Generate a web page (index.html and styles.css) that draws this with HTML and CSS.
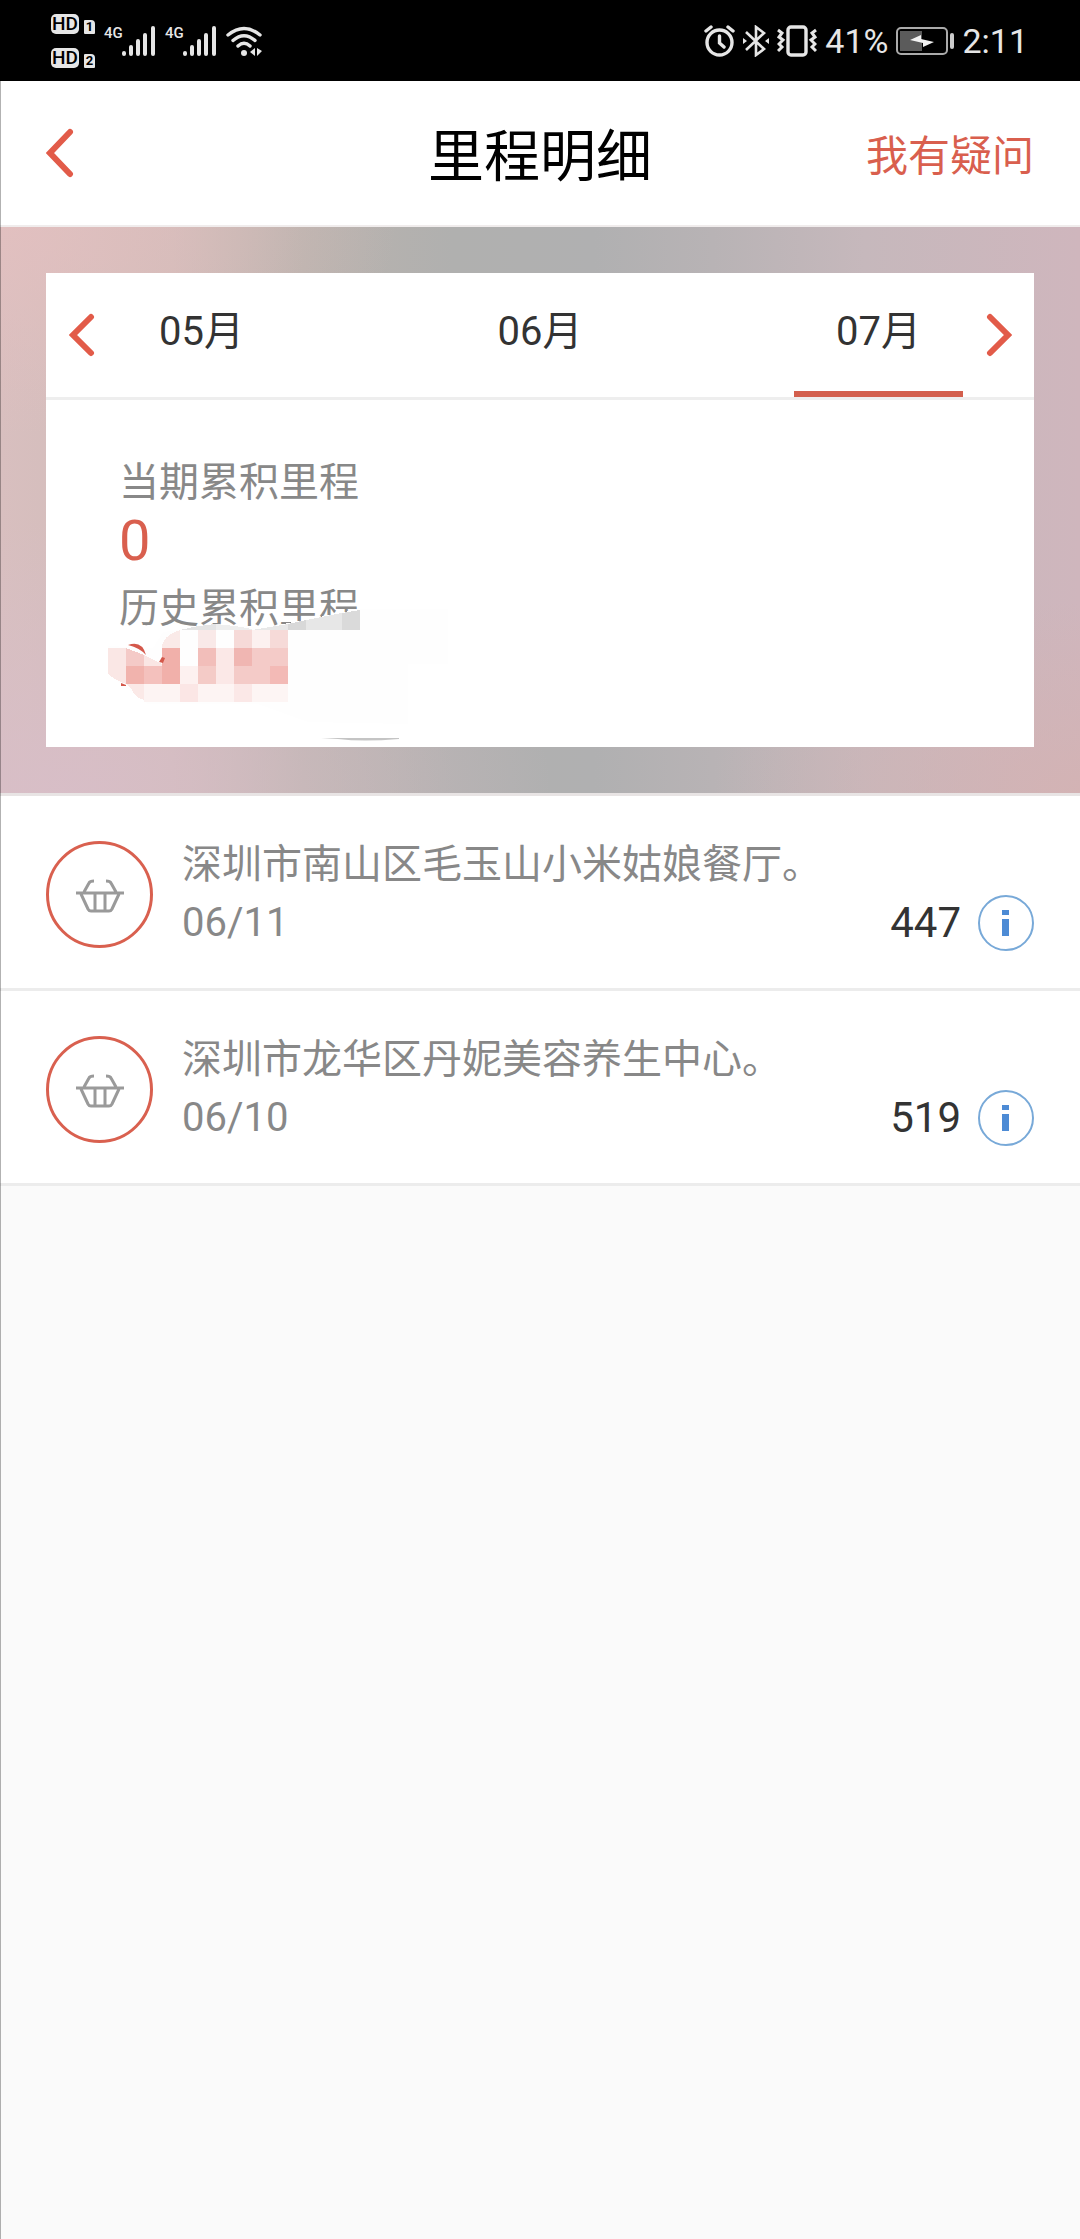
FILE: index.html
```html
<!DOCTYPE html>
<html lang="zh-CN">
<head>
<meta charset="utf-8">
<meta name="viewport" content="width=device-width">
<title>里程明细</title>
<link rel="stylesheet" href="styles.css">
</head>
<body>
<svg class="defs" aria-hidden="true">
  <symbol id="basket" viewBox="0 0 48 34">
    <path d="M0 14H48M8 13L13 4Q14 2 18 2M40 13L35 4Q34 2 30 2M5 15L12 30Q13 32 15 32H33Q35 32 36 30L43 15M19 14V32M29 14V32" fill="none" stroke="#9a9a9a" stroke-width="3"/>
  </symbol>
  <symbol id="bars" viewBox="0 0 34 30">
    <path d="M2 27V28M9 21V28M16 15V28M23 9V28M31 2V28" fill="none" stroke="#e6e6e6" stroke-width="4" stroke-linecap="round"/>
  </symbol>
  <symbol id="info" viewBox="0 0 56 56">
    <circle cx="28" cy="28" r="27" fill="none" stroke="#78a9d8" stroke-width="2"/>
    <path d="M24 15h7v5h-7zM24 24h7v17h-7z" fill="#4d8bd5"/>
  </symbol>
</svg>
<div class="page">
  <div class="status">
    <div class="status-group">
      <div class="sims">
        <div class="sim"><span class="hd">HD</span><span class="slot">1</span></div>
        <div class="sim"><span class="hd">HD</span><span class="slot">2</span></div>
      </div>
      <div class="signal"><span class="net">4G</span><svg class="bars"><use href="#bars"/></svg></div>
      <div class="signal"><span class="net">4G</span><svg class="bars"><use href="#bars"/></svg></div>
      <svg class="wifi" viewBox="0 0 36 30" fill="none" stroke="#e6e6e6" stroke-width="3.4" stroke-linecap="round">
        <path d="M2 9Q18-4 34 9M7 14.500Q18 5 29 14.500M12 20Q18 14.500 24 20"/>
        <circle cx="18" cy="27" r="3" fill="#e6e6e6" stroke="none"/>
        <path d="M24 26L29 22V30zM36 25L31 22V30z" fill="#e6e6e6" stroke="none"/>
      </svg>
    </div>
    <div class="status-group status-right">
      <svg class="alarm" viewBox="0 0 31 32" fill="none" stroke="#e6e6e6" stroke-width="3.400" stroke-linecap="round">
        <circle cx="15.500" cy="17.500" r="12.500"/><path d="M15.500 11V18L20 22M2 6L7 2M29 6L24 2"/>
      </svg>
      <svg class="bluetooth" viewBox="0 0 26 32" fill="none" stroke="#e6e6e6" stroke-width="2.600">
        <path d="M3 7L21 24L13 30V2L21 8L3 25"/><path d="M0 13L4 16L0 19zM26 13L22 16L26 19z" fill="#e6e6e6" stroke="none"/>
      </svg>
      <svg class="vibrate" viewBox="0 0 40 32" fill="none" stroke="#e6e6e6" stroke-width="3">
        <rect x="11" y="2" width="18" height="28" rx="3" stroke-width="3.400"/>
        <path d="M1 5L5 8L2 12L6 15L2 19L5 22L1 26M39 5L35 8L38 12L34 15L38 19L35 22L39 26"/>
      </svg>
      <span>41%</span>
      <svg class="battery" viewBox="0 0 58 28">
        <rect x="1" y="1" width="50" height="26" rx="4" fill="none" stroke="#aaa" stroke-width="2"/>
        <path d="M4 4H26V24H4z" fill="#5b5b5b"/>
        <path d="M14 13L25 8V12L38 15L27 20V16z" fill="#f2f2f2"/>
        <rect x="54" y="6" width="4" height="16" rx="2" fill="#ccc"/>
      </svg>
      <span class="clock">2:11</span>
    </div>
  </div>

  <header class="header">
    <button class="back" aria-label="返回"><svg class="chevron-back" viewBox="0 0 28 50"><path d="M24 4L4 25L24 46"/></svg></button>
    <h1 class="title">里程明细</h1>
    <a class="help" href="#help">我有疑问</a>
  </header>

  <section class="banner">
    <div class="card">
      <div class="months">
        <button class="step" aria-label="上个月"><svg class="chevron" viewBox="0 0 26 44"><path d="M22 4L4 22L22 40"/></svg></button>
        <div class="tabs">
          <button class="tab">05月</button>
          <button class="tab">06月</button>
          <button class="tab tab-active">07月</button>
        </div>
        <button class="step" aria-label="下个月"><svg class="chevron" viewBox="0 0 26 44"><path d="M4 4L22 22L4 40"/></svg></button>
      </div>
      <div class="stats">
        <p class="label">当期累积里程</p>
        <p class="value">0</p>
        <p class="label label-next">历史累积里程</p>
        <div class="value masked">
          <svg class="mosaic" viewBox="0 0 360 130" shape-rendering="crispEdges">
            <path d="M72 16Q110 8 155 14L252 -5H340V50H300V110L200 108L150 90H40L0 60V32L45 34L55 18z" fill="#fefefe"/>
            <path d="M72 16Q92 11 108 10V16z" fill="#e4e4e4"/>
            <path d="M108 10Q130 12 144 15V16H108z" fill="#eee"/>
            <path d="M144 16L180 10V16z" fill="#e8e8e8"/>
            <path d="M180 10L198 6V16H180z" fill="#d8d8d8"/>
            <path d="M198 6L234 -1V16H198z" fill="#e7e7e7"/>
            <path d="M234 -1L252 -4V16H234z" fill="#dadada"/>
            <path d="M54 34Q54 22 72 16V34z" fill="#faeae8"/>
            <path d="M90 16h18v18h-18z" fill="#f9e9e8"/>
            <path d="M126 16h18v18h-18z" fill="#f6dad8"/>
            <path d="M144 16h18v18h-18z" fill="#fcf1f0"/>
            <path d="M162 16h18v18h-18z" fill="#f6dad8"/>
            <path d="M0 34h18v36Q8 67 0 60z" fill="#fae7e5"/>
            <path d="M18 34L36 41V52H18z" fill="#f4cac7"/>
            <path d="M36 41L54 50V52H36z" fill="#fae6e4"/>
            <path d="M54 34h18v36h-18z" fill="#f1b0aa"/>
            <path d="M18 52h18v18h-18z" fill="#f1b3ad"/>
            <path d="M36 52h18v18h-18z" fill="#f4c1bd"/>
            <path d="M72 52h18v18h-18z" fill="#fdf1f0"/>
            <path d="M90 34h18v18h-18z" fill="#f2beba"/>
            <path d="M90 52h18v18h-18z" fill="#f4cbc7"/>
            <path d="M108 34h18v36h-18z" fill="#fbe8e7"/>
            <path d="M126 34h18v18h-18z" fill="#f0b6b2"/>
            <path d="M144 34h36v18h-36z" fill="#f4cbc8"/>
            <path d="M126 52h36v18h-36z" fill="#f4cbc8"/>
            <path d="M162 52h18v18h-18z" fill="#f3bab6"/>
            <path d="M18 70H36V86Q27 84 23 74z" fill="#fbe9e7"/>
            <path d="M36 70h36v18h-36z" fill="#fdf4f3"/>
            <path d="M72 70h18v18h-18z" fill="#fbe6e5"/>
            <path d="M90 70h36v18h-36z" fill="#fdf4f3"/>
            <path d="M126 70h18v18h-18z" fill="#fbe8e7"/>
            <path d="M144 70h36v18h-36z" fill="#fdf5f4"/>
            <g fill="#d4584b" shape-rendering="auto">
              <path d="M20 31Q34 26 38 41Q32 34 20 31z"/>
              <path d="M51 48L54 43L57 44L55 49z"/>
              <path d="M13 69L18 71V72H13z"/>
            </g>
            <path d="M213 124H291V125Q255 128 230 125z" fill="#c4c4c4" shape-rendering="auto"/>
          </svg>
        </div>
      </div>
    </div>
  </section>

  <ul class="list">
    <li class="row">
      <span class="badge"><svg class="basket"><use href="#basket"/></svg></span>
      <div class="body">
        <p class="name">深圳市南山区毛玉山小米姑娘餐厅。</p>
        <div class="meta">
          <span class="date">06/11</span>
          <span class="amount">447</span>
          <button class="info" aria-label="详情"><svg class="info-icon"><use href="#info"/></svg></button>
        </div>
      </div>
    </li>
    <li class="row">
      <span class="badge"><svg class="basket"><use href="#basket"/></svg></span>
      <div class="body">
        <p class="name">深圳市龙华区丹妮美容养生中心。</p>
        <div class="meta">
          <span class="date">06/10</span>
          <span class="amount">519</span>
          <button class="info" aria-label="详情"><svg class="info-icon"><use href="#info"/></svg></button>
        </div>
      </div>
    </li>
  </ul>
</div>
</body>
</html>
```

FILE: styles.css
```css
* { box-sizing: border-box; }
body, h1, p, ul { margin: 0; padding: 0; }
body {
  background: #fafafa;
  color: #333;
  font-family: Roboto, "Noto Sans CJK SC", sans-serif;
  font-size: 40px;
}
button {
  border: 0;
  padding: 0;
  background: none;
  color: inherit;
  font: inherit;
}
svg { display: block; flex: none; }
.defs { position: absolute; width: 0; height: 0; }
.page { position: relative; min-height: 100vh; }
.page::after {
  content: "";
  position: absolute;
  top: 81px;
  bottom: 0;
  left: 0;
  width: 1px;
  background: rgba(0, 0, 0, 0.3);
}

/* Status bar */
.status {
  display: flex;
  justify-content: space-between;
  height: 81px;
  padding: 0 52px 0 51px;
  background: #000;
  color: #e6e6e6;
  font-size: 34px;
}
.status-group { display: flex; align-items: center; gap: 9px; }
.status-right { gap: 8px; }
.sims { display: flex; flex-direction: column; gap: 14px; }
.sim { display: flex; align-items: flex-end; gap: 5px; }
.hd, .slot {
  background: #e6e6e6;
  color: #000;
  font-weight: 500;
  text-align: center;
}
.hd { width: 28px; border-radius: 5px; font-size: 19px; line-height: 20px; }
.slot { width: 11px; border-radius: 1px 4px 1px 1px; font-size: 13px; line-height: 14px; font-weight: 700; }
.signal { display: flex; align-items: flex-start; }
.net { width: 18px; font-size: 15px; line-height: 14px; font-weight: 500; }
.bars { width: 34px; height: 30px; }
.wifi { width: 36px; height: 30px; }
.alarm { width: 31px; height: 32px; }
.bluetooth { width: 26px; height: 32px; }
.vibrate { width: 40px; height: 32px; }
.battery { width: 58px; height: 28px; }

/* Header */
.header {
  display: grid;
  grid-template-columns: 1fr auto 1fr;
  align-items: center;
  height: 146px;
  padding: 0 46px;
  background: #fff;
  border-bottom: 2px solid #f0ecec;
}
.back { justify-self: start; }
.chevron-back { width: 28px; height: 50px; }
.chevron { width: 26px; height: 44px; }
.chevron-back path, .chevron path {
  fill: none;
  stroke: #e25b49;
  stroke-width: 6px;
  stroke-linecap: round;
}
.title, .help { padding-top: 8px; line-height: 80px; }
.title { color: #000; font-size: 56px; font-weight: 400; }
.help { justify-self: end; color: #d95f4e; font-size: 42px; text-decoration: none; }

/* Month card */
.banner {
  padding: 46px;
  border-bottom: 3px solid #e8e4e4;
  background:
    radial-gradient(ellipse at 0 0, rgba(228, 192, 192, 0.8), transparent 26%),
    radial-gradient(ellipse at 6% 100%, rgba(216, 190, 200, 0.9), transparent 34%),
    radial-gradient(ellipse at 100% 100%, rgba(212, 178, 178, 0.8), transparent 24%),
    linear-gradient(90deg, #d8bfbf 0%, #cfbbb8 16%, #bab3ae 28%, #b0b0af 42%, #b0b0b1 55%, #b8b3b5 66%, #c6b8bc 80%, #cfb6bd 100%);
}
.card { background: #fff; }
.months {
  display: flex;
  align-items: stretch;
  height: 127px;
  border-bottom: 3px solid #eee;
}
.step { display: flex; align-items: center; justify-content: center; width: 71px; }
.tabs { display: flex; flex: 1; justify-content: space-between; }
.tab { width: 169px; padding-bottom: 8px; border-bottom: 6px solid transparent; }
.tab-active { border-color: #d35f4d; }
.stats { padding: 57px 73px 48px; }
.label { color: #888; line-height: 52px; }
.label-next { margin-top: 10px; }
.value { height: 64px; color: #d95f4e; font-size: 56px; line-height: 64px; }
.masked { position: relative; }
.mosaic {
  position: absolute;
  top: -21px;
  left: -11px;
  width: 360px;
  height: 130px;
  overflow: visible;
}

/* Records */
.list { list-style: none; background: #fff; }
.row {
  display: flex;
  align-items: center;
  gap: 29px;
  padding: 40px 46px 36px;
  border-bottom: 3px solid #ececec;
}
.badge {
  display: flex;
  align-items: center;
  justify-content: center;
  width: 107px;
  height: 107px;
  border: 3px solid #d9604f;
  border-radius: 50%;
}
.basket { width: 48px; height: 34px; margin-top: 4px; }
.body { flex: 1; line-height: 58px; }
.name, .date { color: #888; }
.meta { display: flex; align-items: center; height: 58px; }
.amount { margin-left: auto; font-size: 42px; }
.info { margin-left: 17px; }
.info-icon { width: 56px; height: 56px; }
```
